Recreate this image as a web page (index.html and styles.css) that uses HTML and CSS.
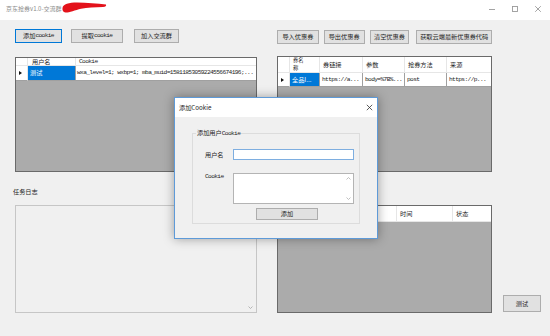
FILE: index.html
```html
<!DOCTYPE html>
<html lang="zh-CN">
<head>
<meta charset="utf-8">
<title>京东抢券v1.0-交流群</title>
<link rel="stylesheet" href="styles.css">
</head>
<body>
<div class="window">
  <div class="titlebar">
    <span class="title">京东抢券v1.0-交流群</span>
    <svg class="scribble" width="110" height="16" viewBox="0 0 110 16"><path d="M62.5 8 C63 4 69 2.5 77 2.5 C87 2.6 97 3.5 106 4.5 C106.5 6 105.5 7 103 7 C95 7.2 87 7.6 81 8.8 C75 10.2 69 12.8 65.5 12.6 C63 12.4 62.2 10.2 62.5 8 Z" fill="#e3121b"/></svg>
    <div class="controls">
      <span class="ctl"><svg width="8" height="8" viewBox="0 0 8 8"><path d="M1 4.5h6" stroke="#9a9a9a" stroke-width="0.9"/></svg></span>
      <span class="ctl"><svg width="8" height="8" viewBox="0 0 8 8"><rect x="1.5" y="1.5" width="5" height="5" fill="none" stroke="#9a9a9a" stroke-width="0.9"/></svg></span>
      <span class="ctl"><svg width="8" height="8" viewBox="0 0 8 8"><path d="M1.2 1.2L6.8 6.8M6.8 1.2L1.2 6.8" stroke="#9a9a9a" stroke-width="0.9"/></svg></span>
    </div>
  </div>

  <div class="main">
    <div class="left">
      <div class="btnrow">
        <button class="btn default w47">添加<span class="m">cookie</span></button>
        <button class="btn w52 ml9">提取<span class="m">cookie</span></button>
        <button class="btn w45 ml11">加入交流群</button>
      </div>

      <div class="grid grid-users">
        <div class="hrow cols-users">
          <div class="hc"></div>
          <div class="hc pad4">用户名</div>
          <div class="hc"><span class="m">Cookie</span></div>
        </div>
        <div class="drow cols-users">
          <div class="rh"><span class="tri"></span></div>
          <div class="dc sel">测试</div>
          <div class="dc pad1"><span class="m">wxa_level=1; wxbp=1; mba_muid=15811853059224556674196;...</span></div>
        </div>
      </div>

      <div class="label">任务日志</div>
      <div class="log">
        <svg width="5" height="3" viewBox="0 0 5 3"><path d="M0.5 0.5L2.5 2.5L4.5 0.5" stroke="#a6a6a6" stroke-width="0.8" fill="none"/></svg>
      </div>
    </div>

    <div class="right">
      <div class="btnrow">
        <button class="btn w43">导入优惠券</button>
        <button class="btn w42 ml5">导出优惠券</button>
        <button class="btn w41 ml5">清空优惠券</button>
        <button class="btn w78 ml7">获取云端最新优惠券代码</button>
      </div>

      <div class="grid grid-coupons">
        <div class="hrow tall cols-coupons">
          <div class="hc"></div>
          <div class="hc two"><span>券名</span><span>称</span></div>
          <div class="hc">券链接</div>
          <div class="hc">参数</div>
          <div class="hc">抢券方法</div>
          <div class="hc">来源</div>
        </div>
        <div class="drow short cols-coupons">
          <div class="rh"><span class="tri"></span></div>
          <div class="dc sel">全品I...</div>
          <div class="dc"><span class="m">https://a...</span></div>
          <div class="dc"><span class="m">body=%7B%...</span></div>
          <div class="dc"><span class="m">post</span></div>
          <div class="dc"><span class="m">https://p...</span></div>
        </div>
      </div>

      <div class="grid grid-tasks">
        <div class="hrow tall cols-tasks">
          <div class="hc"></div>
          <div class="hc"></div>
          <div class="hc"></div>
          <div class="hc">时间</div>
          <div class="hc">状态</div>
        </div>
      </div>
    </div>

    <div class="side">
      <button class="btn test">测试</button>
    </div>
  </div>

  <div class="dialog">
    <div class="dlg-title">
      <span>添加Cookie</span>
      <span class="dlg-close"><svg width="7" height="7" viewBox="0 0 7 7"><path d="M0.8 0.8L6.2 6.2M6.2 0.8L0.8 6.2" stroke="#333" stroke-width="0.8"/></svg></span>
    </div>
    <div class="dlg-body">
      <fieldset class="group">
        <legend>添加用户<span class="m">Cookie</span></legend>
        <div class="form">
          <div class="flabel">用户名</div>
          <div class="input"></div>
          <div class="flabel top"><span class="m">Cookie</span></div>
          <div class="textarea">
            <div class="sb">
              <svg width="5" height="3" viewBox="0 0 5 3"><path d="M0.5 2.5L2.5 0.5L4.5 2.5" stroke="#b0b0b0" stroke-width="0.8" fill="none"/></svg>
              <svg width="5" height="3" viewBox="0 0 5 3"><path d="M0.5 0.5L2.5 2.5L4.5 0.5" stroke="#b0b0b0" stroke-width="0.8" fill="none"/></svg>
            </div>
          </div>
          <div></div>
          <button class="btn addbtn">添加</button>
        </div>
      </fieldset>
    </div>
  </div>
</div>
</body>
</html>
```

FILE: styles.css
```css
* { box-sizing: border-box; }
html, body { margin: 0; padding: 0; }
body {
  width: 550px;
  height: 336px;
  overflow: hidden;
  background: #f0f0f0;
  font-family: "Noto Sans CJK SC", "Microsoft YaHei", sans-serif;
  color: #1e1e1e;
}
.window {
  position: relative;
  width: 550px;
  height: 336px;
  background: #f0f0f0;
}

/* title bar */
.titlebar {
  position: relative;
  height: 20px;
  background: #fff;
  display: flex;
  align-items: center;
  padding-left: 6px;
  padding-bottom: 2px;
}
.title {
  font-size: 6px;
  line-height: 8px;
  color: #8c8c8c;
  white-space: nowrap;
}
.scribble { position: absolute; left: 0; top: 0; }
.controls {
  margin-left: auto;
  display: flex;
  align-items: center;
  padding-right: 1px;
}
.ctl {
  width: 23px;
  height: 10px;
  display: flex;
  align-items: center;
  justify-content: center;
}

/* layout */
.main {
  display: flex;
  height: 316px;
  padding-left: 15px;
}
.left { width: 242px; display: flex; flex-direction: column; }
.right { width: 215px; margin-left: 20px; display: flex; flex-direction: column; }
.side {
  width: 38px;
  margin-left: 11px;
  display: flex;
  flex-direction: column;
  justify-content: flex-end;
  padding-bottom: 24px;
}

/* buttons */
.btnrow { display: flex; height: 14px; }
.left .btnrow { margin-top: 9px; }
.right .btnrow { margin-top: 10px; }
.btn {
  height: 14px;
  margin: 0;
  padding: 0;
  background: #e1e1e1;
  border: 1px solid #adadad;
  border-radius: 0;
  font-family: inherit;
  font-size: 6.2px;
  line-height: 8px;
  color: #1e1e1e;
  display: flex;
  align-items: center;
  justify-content: center;
  white-space: nowrap;
}
.btn.default { border-color: #0078d7; }
.w41 { width: 41px; } .w42 { width: 42px; } .w43 { width: 43px; }
.w45 { width: 45px; } .w47 { width: 47px; } .w52 { width: 52px; } .w78 { width: 78px; }
.ml5 { margin-left: 5px; } .ml7 { margin-left: 7px; } .ml9 { margin-left: 9px; } .ml11 { margin-left: 11px; }
.btn.test { width: 38px; height: 17px; }

.m {
  font-family: "Liberation Mono", "DejaVu Sans Mono", monospace;
  letter-spacing: -0.62px;
}

/* data grids */
.grid {
  border: 1px solid #6a6a6a;
  background: #ababab;
  display: flex;
  flex-direction: column;
  overflow: hidden;
}
.grid-users { margin-top: 14px; height: 115px; }
.grid-coupons { margin-top: 12px; height: 116px; }
.grid-tasks { margin-top: 33px; height: 108px; }

.hrow, .drow {
  display: grid;
  background: #fff;
  font-size: 6.2px;
  white-space: nowrap;
}
.hrow { height: 8px; border-bottom: 1px solid #e6e6e6; }
.hrow.tall { height: 16px; }
.drow { height: 15px; }
.drow.short { height: 14px; }

.cols-users { grid-template-columns: 12px 48px 1fr; }
.cols-coupons { grid-template-columns: 12px 30px 43px 42px 42px 44px; }
.cols-tasks { grid-template-columns: 12px 50px 57px 56px 38px; }

.hc {
  display: flex;
  align-items: center;
  padding-left: 3px;
  border-right: 1px solid #e6e6e6;
  line-height: 7px;
  overflow: hidden;
}
.hc:last-child { border-right: none; }
.hc.pad4 { padding-left: 4px; }
.hc.two {
  flex-direction: column;
  align-items: flex-start;
  justify-content: center;
  font-size: 5.3px;
  line-height: 7.7px;
  padding-top: 0;
  overflow: visible;
}

.dc {
  display: flex;
  align-items: center;
  padding-left: 2px;
  border-right: 1px solid #a0a0a0;
  border-bottom: 1px solid #a0a0a0;
  line-height: 8px;
  overflow: hidden;
}
.dc:last-child { border-right: none; }
.dc.pad1 { padding-left: 1px; }
.dc.sel { background: #0078d7; color: #fff; }
.rh {
  display: flex;
  align-items: center;
  justify-content: center;
  border-right: 1px solid #e6e6e6;
  border-bottom: 1px solid #a0a0a0;
}
.tri {
  width: 0;
  height: 0;
  border-left: 3px solid #111;
  border-top: 2.5px solid transparent;
  border-bottom: 2.5px solid transparent;
  margin-left: -2px;
}

/* task log */
.label {
  margin-top: 15px;
  height: 10px;
  font-size: 6.2px;
  line-height: 10px;
  margin-left: -2px;
}
.log {
  margin-top: 8px;
  height: 108px;
  border: 1px solid #c6c6c6;
  background: #f0f0f0;
  display: flex;
  align-items: flex-end;
  justify-content: flex-end;
  padding: 0 3px 3px 0;
}

/* dialog */
.dialog {
  position: absolute;
  left: 174px;
  top: 97px;
  width: 204px;
  height: 142px;
  border: 1px solid #5e9ad8;
  background: #f0f0f0;
  box-shadow: 0 0 10px rgba(0, 0, 0, 0.35);
  display: flex;
  flex-direction: column;
}
.dlg-title {
  height: 19px;
  background: #fff;
  display: flex;
  align-items: center;
  padding-left: 4px;
  font-size: 6.2px;
  line-height: 8px;
  color: #1e1e1e;
}
.dlg-close {
  margin-left: auto;
  width: 16px;
  display: flex;
  justify-content: center;
}
.dlg-body { padding: 12px 17px 0; }
.group {
  margin: 0;
  min-width: 0;
  border: 1px solid #dcdcdc;
  padding: 11px 5px 3px 12px;
}
.group legend {
  font-size: 6.2px;
  line-height: 8px;
  padding: 0 1px;
  margin-left: -9px;
  color: #1e1e1e;
}
.form {
  display: grid;
  grid-template-columns: 28px 121px;
  grid-template-rows: 11px 44px 16px;
}
.flabel {
  font-size: 6.2px;
  line-height: 8px;
  display: flex;
  align-items: center;
}
.flabel.top { align-items: flex-start; margin-top: 13px; }
.input {
  height: 11px;
  background: #fff;
  border: 1px solid #7eaee0;
}
.textarea {
  margin-top: 13px;
  height: 31px;
  background: #fff;
  border: 1px solid #b4b4b4;
  display: flex;
  justify-content: flex-end;
}
.sb {
  width: 9px;
  display: flex;
  flex-direction: column;
  justify-content: space-between;
  align-items: center;
  padding: 3px 0 3px;
}
.btn.addbtn {
  margin-top: 4px;
  margin-left: 23px;
  width: 62px;
  height: 12px;
}
```
